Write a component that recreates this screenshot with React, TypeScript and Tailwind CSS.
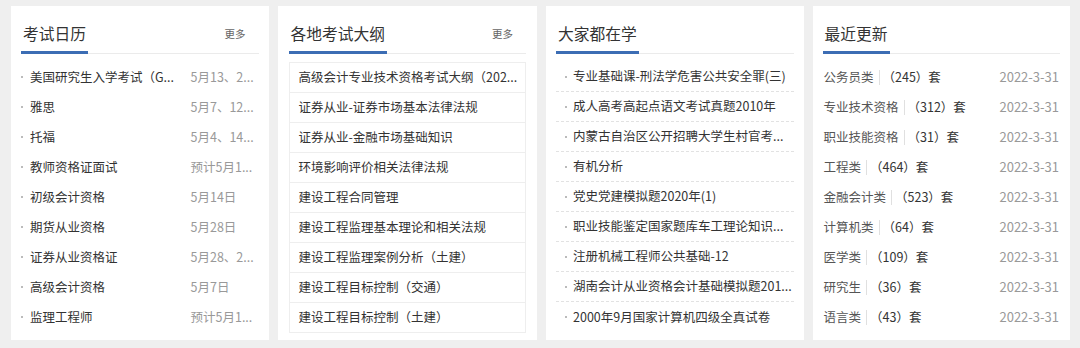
import React from "react";

const FONT = { fontFamily: '"Noto Sans CJK SC", "Noto Sans", sans-serif' };

const cal: [string, string][] = [
  ["美国研究生入学考试（G...", "5月13、2..."],
  ["雅思", "5月7、12..."],
  ["托福", "5月4、14..."],
  ["教师资格证面试", "预计5月1..."],
  ["初级会计资格", "5月14日"],
  ["期货从业资格", "5月28日"],
  ["证券从业资格证", "5月28、2..."],
  ["高级会计资格", "5月7日"],
  ["监理工程师", "预计5月1..."],
];

const outline = [
  "高级会计专业技术资格考试大纲（202...",
  "证券从业-证券市场基本法律法规",
  "证券从业-金融市场基础知识",
  "环境影响评价相关法律法规",
  "建设工程合同管理",
  "建设工程监理基本理论和相关法规",
  "建设工程监理案例分析（土建）",
  "建设工程目标控制（交通）",
  "建设工程目标控制（土建）",
];

const learn = [
  "专业基础课-刑法学危害公共安全罪(三)",
  "成人高考高起点语文考试真题2010年",
  "内蒙古自治区公开招聘大学生村官考...",
  "有机分析",
  "党史党建模拟题2020年(1)",
  "职业技能鉴定国家题库车工理论知识...",
  "注册机械工程师公共基础-12",
  "湖南会计从业资格会计基础模拟题201...",
  "2000年9月国家计算机四级全真试卷",
];

const updates: [string, string][] = [
  ["公务员类", "245"],
  ["专业技术资格", "312"],
  ["职业技能资格", "31"],
  ["工程类", "464"],
  ["金融会计类", "523"],
  ["计算机类", "64"],
  ["医学类", "109"],
  ["研究生", "36"],
  ["语言类", "43"],
];

function Header({ title, more }: { title: string; more?: boolean }) {
  return (
    <div className="h-[48px] flex items-end justify-between border-b border-[#ebebeb]">
      <div className="px-[2px] pb-[7px] border-b-[3px] border-[#3c6db4] -mb-px text-[15.75px] leading-[20px] text-[#333] whitespace-nowrap">
        {title}
      </div>
      {more && (
        <div className="text-[10.5px] leading-[14px] text-[#666] pr-[13px] mb-[12px]">更多</div>
      )}
    </div>
  );
}

function Dot() {
  return <span className="w-[2px] h-[2px] bg-[#bbb] shrink-0" />;
}

export default function App() {
  return (
    <div
      className="w-[1080px] h-[348px] bg-[#efefef] flex gap-[9px] pl-[11px] pr-[10px] pt-[6px] pb-[8px]"
      style={FONT}
    >
      {/* Card 1 */}
      <div className="flex-1 min-w-0 bg-white px-[10px]">
        <Header title="考试日历" more />
        <div className="mt-[8px]">
          {cal.map(([n, d]) => (
            <div key={n} className="h-[30px] flex items-center text-[12.5px] text-[#333] whitespace-nowrap">
              <span className="w-[9px] shrink-0 flex items-center">
                <Dot />
              </span>
              <span className="flex-1 min-w-0">{n}</span>
              <span className="w-[68px] shrink-0 text-[#999]">{d}</span>
            </div>
          ))}
        </div>
      </div>

      {/* Card 2 */}
      <div className="flex-1 min-w-0 bg-white px-[11px]">
        <Header title="各地考试大纲" more />
        <div className="mt-[8px] border-x border-t border-[#eeeeee]">
          {outline.map((n) => (
            <div
              key={n}
              className="h-[30px] flex items-center border-b border-[#eeeeee] px-[9px] text-[12.5px] text-[#333] whitespace-nowrap"
            >
              <span>{n}</span>
            </div>
          ))}
        </div>
      </div>

      {/* Card 3 */}
      <div className="flex-1 min-w-0 bg-white px-[10px]">
        <Header title="大家都在学" />
        <div className="mt-[8px]">
          {learn.map((n, i) => (
            <div
              key={n}
              className={
                "h-[30px] flex items-center text-[12.5px] text-[#333] whitespace-nowrap " +
                (i < learn.length - 1 ? "border-b border-dashed border-[#e2e2e2]" : "")
              }
            >
              <span className="w-[17px] shrink-0 flex items-center pl-[9px]">
                <Dot />
              </span>
              <span className="flex-1 min-w-0">{n}</span>
            </div>
          ))}
        </div>
      </div>

      {/* Card 4 */}
      <div className="flex-1 min-w-0 bg-white px-[10px]">
        <Header title="最近更新" />
        <div className="mt-[8px]">
          {updates.map(([n, c]) => (
            <div key={n} className="h-[30px] flex items-center text-[12.5px] whitespace-nowrap">
              <span className="text-[#555] pl-[1px]">{n}</span>
              <span className="w-px h-[15px] bg-[#e0e0e0] ml-[5px] mr-[3px]" />
              <span className="text-[#333]">（{c}）套</span>
              <span className="ml-auto text-[#999] pr-[1px] text-[13px]">2022-3-31</span>
            </div>
          ))}
        </div>
      </div>
    </div>
  );
}
